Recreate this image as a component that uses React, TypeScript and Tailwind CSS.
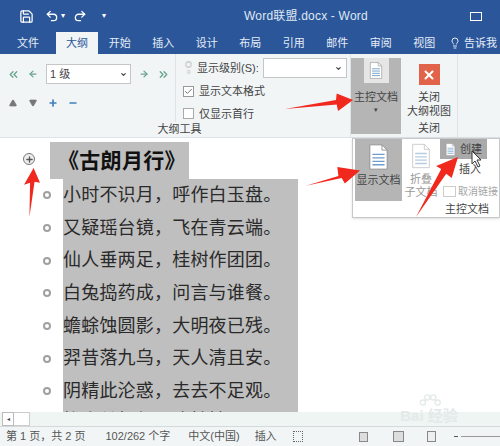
import { Save, Undo2, Redo2, Lightbulb, X, Plus, Minus, Triangle, Check, ChevronDown, ChevronsLeft, ChevronsRight, ArrowLeft, ArrowRight } from "lucide-react";

const cjk = { fontFamily: '"Liberation Sans", "Noto Sans CJK SC", sans-serif' };

const tabs = ["开始", "插入", "设计", "布局", "引用", "邮件", "审阅", "视图"];

const lines = [
  "小时不识月，呼作白玉盘。",
  "又疑瑶台镜，飞在青云端。",
  "仙人垂两足，桂树作团团。",
  "白兔捣药成，问言与谁餐。",
  "蟾蜍蚀圆影，大明夜已残。",
  "羿昔落九乌，天人清且安。",
  "阴精此沦惑，去去不足观。",
];

function DocIcon({ className }: { className?: string }) {
  return (
    <svg viewBox="0 0 24 30" className={className} fill="none">
      <path d="M2 1h14l6 6v22H2z" fill="#fff" stroke="#8a8a8a" />
      <path d="M16 1v6h6" stroke="#8a8a8a" />
      <path d="M5 12h14M5 16h14M5 20h14M5 24h14" stroke="#6f9cc8" strokeWidth="1.6" />
    </svg>
  );
}

function RedArrow({ className, d }: { className: string; d: string }) {
  return (
    <svg viewBox="0 0 100 100" preserveAspectRatio="none" className={className}>
      <path d={d} fill="#f0281e" />
    </svg>
  );
}

export default function App() {
  return (
    <div className="relative flex h-[446px] w-[500px] flex-col overflow-hidden bg-white text-[#444]" style={cjk}>
      {/* title bar */}
      <div className="flex h-8 items-center bg-[#2b579a] pl-[19px] text-white">
        <Save size={15} strokeWidth={2} />
        <Undo2 size={14} strokeWidth={2.2} className="ml-[11px]" />
        <span className="ml-[2px] text-[8px] leading-none">▾</span>
        <Redo2 size={14} strokeWidth={2.2} className="ml-[8px]" />
        <span className="ml-[15px] text-[8px] leading-none">▾</span>
        <span className="ml-[138px] whitespace-nowrap text-[12px] tracking-[0.2px] text-[#dfe7f3]">Word联盟.docx - Word</span>
        <div className="ml-[102px] h-[9px] w-[12px] border border-white" />
      </div>

      {/* tabs */}
      <div className="flex h-[22px] items-end bg-[#2b579a] text-[11px] text-[#e6ecf6]">
        <span className="flex h-full w-[56px] items-center justify-center">文件</span>
        <span className="flex h-full w-[42px] items-center justify-center bg-[#f1f5f6] text-[#2b579a]">大纲</span>
        {tabs.map((t) => (
          <span key={t} className="flex h-full w-[43.5px] items-center justify-center">{t}</span>
        ))}
        <span className="ml-[3px] flex h-full items-center gap-[3px] whitespace-nowrap">
          <Lightbulb size={12} />告诉我
        </span>
      </div>

      {/* ribbon */}
      <div className="flex h-[84px] border-b border-[#dfe3e5] bg-[#f1f5f6] text-[11px]">
        <div className="flex w-[351px] flex-col border-r border-[#dfe3e5]">
          <div className="flex flex-1">
            <div className="w-[176px] border-r border-[#dfe3e5] pl-[7px] pt-[10px]">
              <div className="flex h-[20px] items-center text-[#6ba58c]">
                <ChevronsLeft size={13} strokeWidth={2.5} />
                <ArrowLeft size={10} strokeWidth={3} className="ml-[8px]" />
                <div className="ml-[8px] flex h-[20px] w-[85px] items-center justify-between border border-[#c6c6c6] bg-white px-[3px] text-[#444]">
                  <span>1 级</span>
                  <ChevronDown size={7} strokeWidth={4} />
                </div>
                <ArrowRight size={10} strokeWidth={3} className="ml-[8px]" />
                <ChevronsRight size={13} strokeWidth={2.5} className="ml-[8px]" />
              </div>
              <div className="mt-[14px] flex items-center pl-[2px]">
                <Triangle size={8} fill="#777" stroke="#777" />
                <Triangle size={8} fill="#777" stroke="#777" className="ml-[12px] rotate-180" />
                <Plus size={10} strokeWidth={4} className="ml-[11px] text-[#3f7fbf]" />
                <Minus size={10} strokeWidth={4} className="ml-[10px] text-[#3f7fbf]" />
              </div>
            </div>
            <div className="flex flex-col gap-[6px] pl-[7px] pt-[4px]">
              <div className="flex items-center gap-[3px]">
                <div className="flex h-[14px] w-[11px] flex-col items-center text-[7px] leading-[7px] text-[#888]">
                  <span>◎</span>
                  <span>○</span>
                </div>
                <span className="whitespace-nowrap">显示级别(S):</span>
                <div className="ml-[1px] flex h-[20px] w-[84px] items-center justify-end border border-[#c6c6c6] bg-white pr-[4px]">
                  <ChevronDown size={7} strokeWidth={4} />
                </div>
              </div>
              <div className="-mt-[1px] flex items-center gap-[5px]">
                <div className="flex h-[11px] w-[11px] items-center justify-center border border-[#999] bg-white">
                  <Check size={9} strokeWidth={2} />
                </div>
                <span className="whitespace-nowrap">显示文本格式</span>
              </div>
              <div className="flex items-center gap-[5px]">
                <div className="h-[11px] w-[11px] border border-[#aaa] bg-white" />
                <span className="whitespace-nowrap">仅显示首行</span>
              </div>
            </div>
          </div>
          <span className="w-[254px] pb-[1px] pl-[105px] text-center leading-[14px]">大纲工具</span>
        </div>
        <div className="mt-[4px] flex h-[76px] w-[50px] flex-col items-center bg-[#b5b5b5]">
          <div className="flex h-[25px] w-[25px] items-center justify-center bg-[#e6e6e6]">
            <DocIcon className="h-[17px] w-[14px]" />
          </div>
          <span className="mt-[8px] whitespace-nowrap leading-[12px]">主控文档</span>
          <span className="text-[7px] leading-[14px]">▾</span>
        </div>
        <div className="flex w-[57px] flex-col items-center border-r border-[#dfe3e5] pt-[10px]">
          <div className="flex h-[21px] w-[21px] items-center justify-center bg-[#e0634a] text-white">
            <X size={14} strokeWidth={3.5} />
          </div>
          <span className="mt-[5px] leading-[14px]">关闭</span>
          <span className="whitespace-nowrap leading-[14px]">大纲视图</span>
          <span className="mt-[4px] leading-[12px]">关闭</span>
        </div>
      </div>

      {/* document */}
      <div className="flex flex-1 flex-col overflow-hidden pl-[23px] pt-[4px]">
        <div className="flex items-center">
          <div className="-mt-[3px] flex h-[12px] w-[12px] items-center justify-center rounded-full border border-[#777] bg-[#eee]">
            <Plus size={9} strokeWidth={3.5} className="text-[#555]" />
          </div>
          <div className="ml-[15px] flex h-[37px] w-[139px] items-center whitespace-nowrap bg-[#bfbfbf] pl-[8px] text-[21px] font-bold leading-none tracking-[0.3px] text-[#111]">
            《古朗月行》
          </div>
        </div>
        {lines.map((l) => (
          <div key={l} className="flex items-center">
            <div className="ml-[20px] h-[8px] w-[8px] rounded-full border-2 border-[#a0a0a0]" />
            <div className="ml-[12px] flex h-[32.7px] w-[235px] shrink-0 items-center whitespace-nowrap bg-[#bfbfbf] text-[18px] tracking-[0.2px] text-[#2a2a2a]">
              {l}
            </div>
          </div>
        ))}
        {/* next line, only its top shows above the scrollbar */}
        <div className="ml-[40px] h-[6px] w-[235px] shrink-0 overflow-hidden whitespace-nowrap bg-[#bfbfbf] pt-[3px] text-[18px] leading-[20px] tracking-[0.2px] text-[#2a2a2a]">
          忧来其如何，凄怆摧心肝。
        </div>
      </div>

      {/* scrollbar */}
      <div className="flex h-[15px] items-center border-b border-[#d5d9da] bg-[#eef5f3] pl-[2px]">
        <div className="flex h-[14px] w-[12px] items-center justify-center border border-[#bbb] bg-white text-[6px]">◂</div>
        <div className="h-[14px] w-[16px] border border-l-0 border-[#ccc] bg-white" />
      </div>

      {/* status bar */}
      <div className="flex h-[19px] items-center whitespace-nowrap bg-[#f1f5f6] pl-[6px] text-[11px] text-[#555]">
        <span>第 1 页，共 2 页</span>
        <span className="ml-[20px]">102/262 个字</span>
        <span className="ml-[18px]">中文(中国)</span>
        <span className="ml-[15px]">插入</span>
        <div className="ml-[16px] h-[11px] w-[11px] border border-dotted border-[#666]" />
        <div className="ml-[56px] h-[10px] w-[9px] border border-[#888] bg-[#ddd]" />
        <div className="ml-[25px] h-[11px] w-[11px] border border-[#888] bg-[#ddd]" />
        <div className="ml-[23px] h-[11px] w-[9px] border border-[#888] bg-[#eee]" />
        <span className="ml-[18px] h-px w-[4px] bg-[#555]" />
        <span className="ml-[3px] h-px w-[40px] bg-[#999]" />
      </div>

      {/* watermark */}
      <div className="absolute left-[385px] top-[393px] flex h-[37px] w-[88px] flex-col items-center text-[#e4e9e9]">
        <svg viewBox="0 0 30 16" className="h-[14px] w-[26px]" fill="none" stroke="#e4e9e9" strokeWidth="1.5">
          <circle cx="8" cy="11" r="3" />
          <circle cx="13" cy="5" r="3" />
          <circle cx="20" cy="5" r="3" />
          <circle cx="25" cy="11" r="3" />
        </svg>
        <span className="whitespace-nowrap text-[15px] font-bold leading-[17px]">Bai 经验</span>
      </div>

      {/* master document dropdown */}
      <div className="absolute left-[352px] top-[138px] flex h-[80px] w-[148px] border border-[#c8c8c8] bg-white text-[11px] shadow-sm">
        <div className="ml-[2px] flex h-[62px] w-[47px] flex-col items-center bg-[#b5b5b5] pt-[5px]">
          <DocIcon className="h-[26px] w-[21px]" />
          <span className="mt-[4px] whitespace-nowrap leading-[13px]">显示文档</span>
        </div>
        <div className="flex w-[38px] flex-col items-center pt-[4px] text-[#9a9a9a]">
          <DocIcon className="h-[26px] w-[20px] opacity-50" />
          <span className="mt-[4px] leading-[13px]">折叠</span>
          <span className="whitespace-nowrap leading-[13px]">子文档</span>
        </div>
        <div className="flex flex-col">
          <div className="flex h-[20px] w-[47px] items-center gap-[4px] bg-[#a9a9a9] pl-[5px]">
            <DocIcon className="h-[13px] w-[11px]" />
            <span>创建</span>
          </div>
          <span className="mt-[4px] pl-[19px] leading-[13px]">插入</span>
          <div className="mt-[8px] flex items-center gap-[2px] whitespace-nowrap pl-[3px] text-[10px] text-[#a5a5a5]">
            <span className="h-[11px] w-[13px] border border-[#ccc]" />
            取消链接
          </div>
        </div>
        <span className="absolute bottom-[2px] left-[92px] leading-[12px]">主控文档</span>
      </div>

      {/* cursor */}
      <svg viewBox="0 0 12 18" className="absolute left-[471px] top-[150px] h-[18px] w-[12px]">
        <path d="M1 1l0 13 3-3 3 6 2-1-3-6h4z" fill="#fff" stroke="#333" />
      </svg>

      {/* annotations */}
      <RedArrow className="absolute left-[285px] top-[92px] h-[20px] w-[68px]" d="M0 85 L75 40 L76 8 L100 40 L78 95 L76 62 Z" />
      <RedArrow className="absolute left-[306px] top-[166px] h-[22px] w-[54px]" d="M0 90 L60 45 L58 5 L100 20 L72 80 L66 55 Z" />
      <RedArrow className="absolute left-[416px] top-[157px] h-[60px] w-[42px]" d="M0 100 L60 20 L48 15 L100 0 L85 35 L72 28 Z" />
      <RedArrow className="absolute left-[24px] top-[168px] h-[49px] w-[16px]" d="M34 100 L38 30 L0 34 L60 0 L100 30 L66 28 Z" />
    </div>
  );
}
